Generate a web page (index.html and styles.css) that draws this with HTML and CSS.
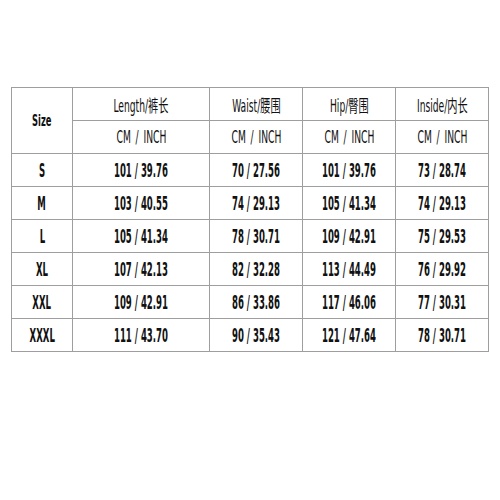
FILE: index.html
```html
<!DOCTYPE html>
<html>
<head>
<meta charset="utf-8">
<link rel="stylesheet" href="styles.css">
</head>
<body>
<div class="page">
  <div class="chart">
    <div class="cell size-head"><span class="t head">Size</span></div>
    <div class="cell"><span class="t head">Length/裤长</span></div>
    <div class="cell"><span class="t head">Waist/腰围</span></div>
    <div class="cell"><span class="t head">Hip/臀围</span></div>
    <div class="cell"><span class="t head">Inside/内长</span></div>
    <div class="cell"><span class="t unit">CM / INCH</span></div>
    <div class="cell"><span class="t unit">CM / INCH</span></div>
    <div class="cell"><span class="t unit">CM / INCH</span></div>
    <div class="cell"><span class="t unit">CM / INCH</span></div>

    <div class="cell"><span class="t val">S</span></div>
    <div class="cell"><span class="t val">101 / 39.76</span></div>
    <div class="cell"><span class="t val">70 / 27.56</span></div>
    <div class="cell"><span class="t val">101 / 39.76</span></div>
    <div class="cell"><span class="t val">73 / 28.74</span></div>

    <div class="cell"><span class="t val">M</span></div>
    <div class="cell"><span class="t val">103 / 40.55</span></div>
    <div class="cell"><span class="t val">74 / 29.13</span></div>
    <div class="cell"><span class="t val">105 / 41.34</span></div>
    <div class="cell"><span class="t val">74 / 29.13</span></div>

    <div class="cell"><span class="t val">L</span></div>
    <div class="cell"><span class="t val">105 / 41.34</span></div>
    <div class="cell"><span class="t val">78 / 30.71</span></div>
    <div class="cell"><span class="t val">109 / 42.91</span></div>
    <div class="cell"><span class="t val">75 / 29.53</span></div>

    <div class="cell"><span class="t val">XL</span></div>
    <div class="cell"><span class="t val">107 / 42.13</span></div>
    <div class="cell"><span class="t val">82 / 32.28</span></div>
    <div class="cell"><span class="t val">113 / 44.49</span></div>
    <div class="cell"><span class="t val">76 / 29.92</span></div>

    <div class="cell"><span class="t val">XXL</span></div>
    <div class="cell"><span class="t val">109 / 42.91</span></div>
    <div class="cell"><span class="t val">86 / 33.86</span></div>
    <div class="cell"><span class="t val">117 / 46.06</span></div>
    <div class="cell"><span class="t val">77 / 30.31</span></div>

    <div class="cell"><span class="t val">XXXL</span></div>
    <div class="cell"><span class="t val">111 / 43.70</span></div>
    <div class="cell"><span class="t val">90 / 35.43</span></div>
    <div class="cell"><span class="t val">121 / 47.64</span></div>
    <div class="cell"><span class="t val">78 / 30.71</span></div>
  </div>
</div>
</body>
</html>
```
FILE: styles.css
```css
html, body {
  margin: 0;
  padding: 0;
  background: #ffffff;
}
.page {
  width: 500px;
  height: 500px;
  padding: 87px 0 0 11px;
  box-sizing: border-box;
}
.chart {
  display: grid;
  grid-template-columns: 60px 136px 92px 92px 92px;
  grid-auto-rows: 32px;
  gap: 1px;
  padding: 1px;
  width: max-content;
  background: #9e9e9e;
}
.cell {
  background: #ffffff;
  display: flex;
  align-items: center;
  justify-content: center;
  overflow: visible;
  white-space: nowrap;
}
.size-head {
  grid-row: span 2;
}
.t {
  display: inline-block;
  font-family: "DejaVu Sans Condensed", "DejaVu Sans", "Noto Sans CJK SC", sans-serif;
  color: #111111;
  transform-origin: center center;
}
.head {
  font-size: 17px;
  font-weight: normal;
  transform: scaleX(0.6);
}
.size-head .head {
  font-size: 16px;
  font-weight: bold;
  transform: scaleX(0.58);
}
.unit {
  font-size: 17px;
  font-weight: normal;
  word-spacing: 3px;
  transform: scaleX(0.6);
}
.val {
  font-size: 19px;
  font-weight: bold;
  transform: scaleX(0.5);
}
```
